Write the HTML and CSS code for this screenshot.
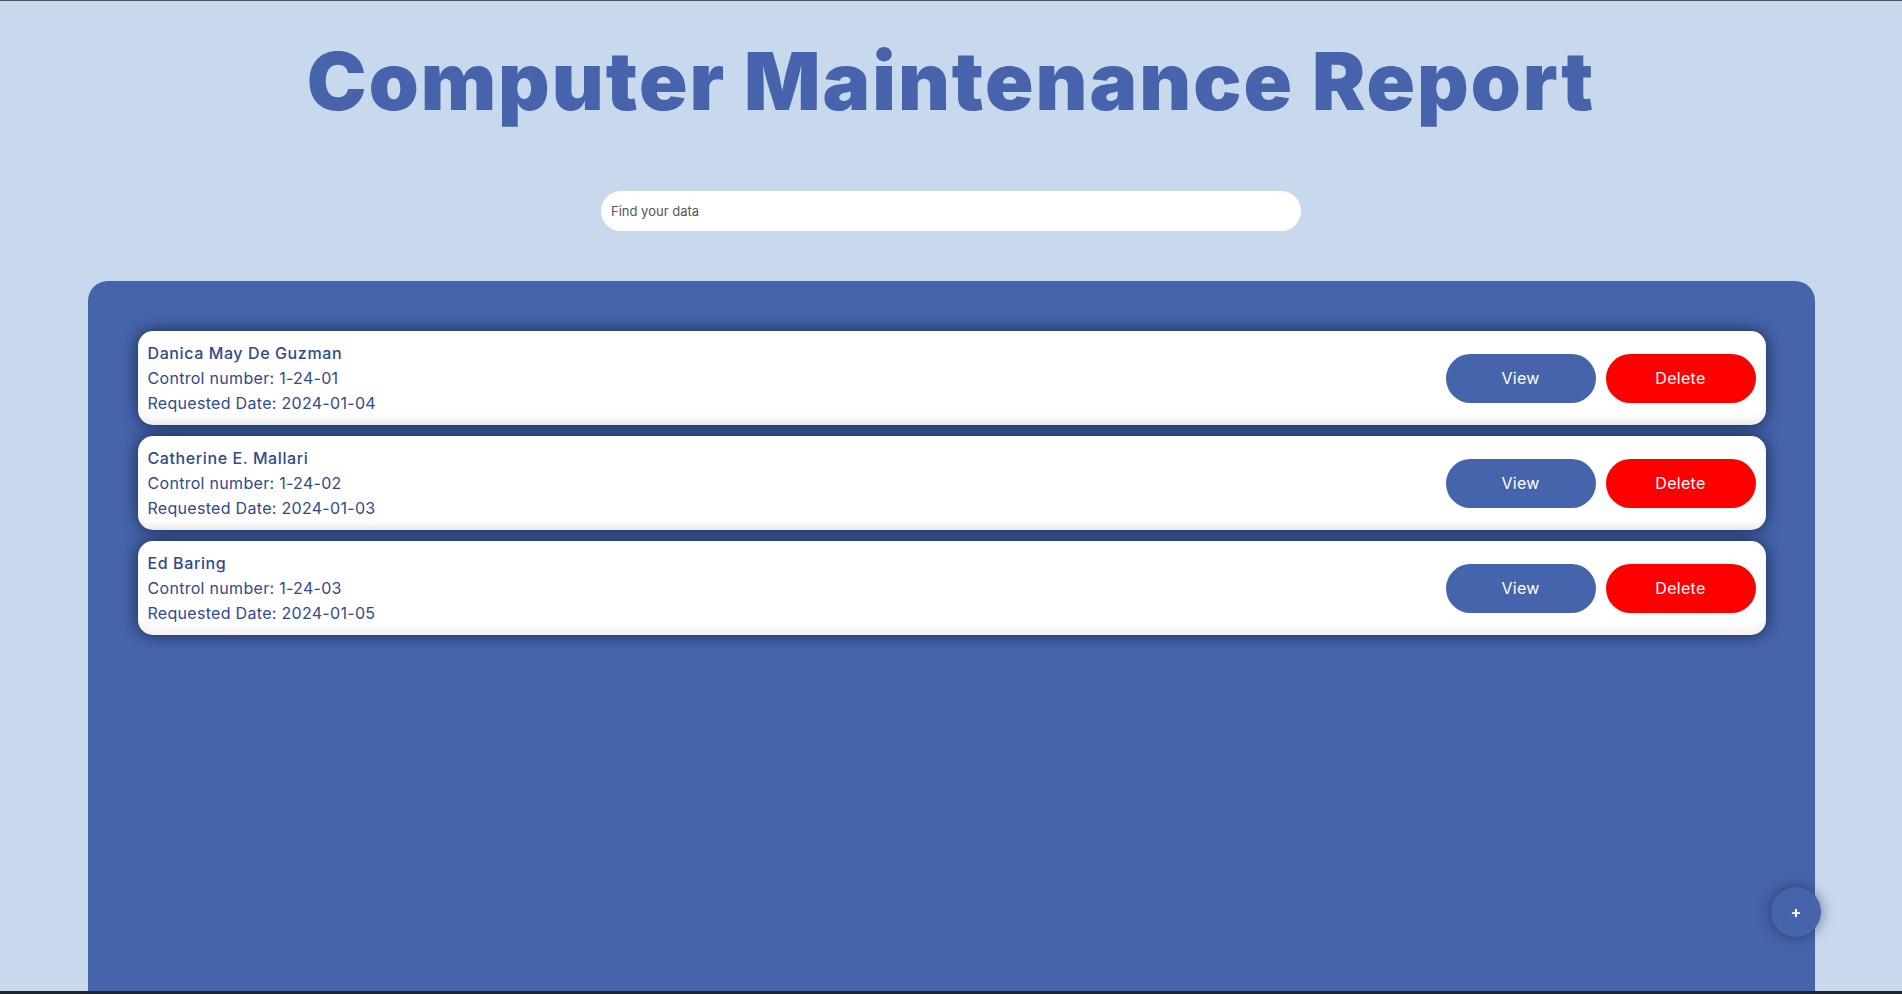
FILE: index.html
```html
<!DOCTYPE html>
<html lang="en">
<head>
<meta charset="utf-8">
<title>Computer Maintenance Report</title>
<link rel="stylesheet" href="styles.css">
</head>
<body>
<div class="page">
  <h1 class="title">Computer Maintenance Report</h1>
  <div class="search-row">
    <input class="search" type="text" placeholder="Find your data">
  </div>
  <main class="panel">
    <div class="card">
      <div class="info">
        <div class="name">Danica May De Guzman</div>
        <div class="line">Control number: 1-24-01</div>
        <div class="line">Requested Date: 2024-01-04</div>
      </div>
      <div class="actions">
        <button class="btn btn-view">View</button>
        <button class="btn btn-delete">Delete</button>
      </div>
    </div>
    <div class="card">
      <div class="info">
        <div class="name">Catherine E. Mallari</div>
        <div class="line">Control number: 1-24-02</div>
        <div class="line">Requested Date: 2024-01-03</div>
      </div>
      <div class="actions">
        <button class="btn btn-view">View</button>
        <button class="btn btn-delete">Delete</button>
      </div>
    </div>
    <div class="card">
      <div class="info">
        <div class="name">Ed Baring</div>
        <div class="line">Control number: 1-24-03</div>
        <div class="line">Requested Date: 2024-01-05</div>
      </div>
      <div class="actions">
        <button class="btn btn-view">View</button>
        <button class="btn btn-delete">Delete</button>
      </div>
    </div>
  </main>
</div>
<button class="fab">+</button>
<div class="edge-bottom"></div>
</body>
</html>
```

FILE: styles.css
```css
* { box-sizing: border-box; }
html, body {
  margin: 0;
  padding: 0;
  height: 100%;
  overflow: hidden;
}
body {
  background: #c8d9ee;
  font-family: "Inter", "Open Sans", sans-serif;
  border-top: 1px solid #4d5566;
}
.page {
  display: flex;
  flex-direction: column;
  align-items: center;
}
.title {
  margin: 32px 0 0;
  font-family: "Inter", sans-serif;
  font-weight: 900;
  font-size: 80px;
  line-height: 96px;
  letter-spacing: 2px;
  color: #4763ac;
  text-align: center;
}
.search-row {
  margin-top: 62px;
  width: 700px;
}
.search {
  display: block;
  width: 700px;
  height: 40px;
  border: none;
  outline: none;
  border-radius: 20px;
  background: #ffffff;
  padding: 0 10px;
  font-family: "Inter", sans-serif;
  font-size: 13px;
  color: #444;
}
.search::placeholder { color: #555; }
.panel {
  margin-top: 50px;
  width: 1727px;
  height: 760px;
  background: #4664ab;
  border-radius: 20px 20px 0 0;
  padding: 50px 49px 0 50px;
  display: flex;
  flex-direction: column;
  gap: 11px;
}
.card {
  height: 94px;
  background: #ffffff;
  border-radius: 15px;
  box-shadow: 0 0 16px rgba(10, 20, 50, 0.75), inset 0 -6px 8px rgba(0, 0, 0, 0.05);
  display: flex;
  align-items: center;
  justify-content: space-between;
  padding: 0 10px;
}
.info {
  display: flex;
  flex-direction: column;
  color: #2f4a8d;
  font-size: 16px;
  line-height: 25px;
  padding-top: 1px;
  letter-spacing: 0.3px;
}
.name { font-weight: 500; letter-spacing: 0.6px; }
.line { font-weight: 400; }
.actions {
  display: flex;
  gap: 10px;
}
.btn {
  width: 150px;
  height: 49px;
  border: none;
  border-radius: 25px;
  color: #ffffff;
  font-family: "Inter", sans-serif;
  font-size: 16px;
  font-weight: 400;
  letter-spacing: 0.3px;
  cursor: pointer;
}
.btn-view { background: #4664ab; }
.btn-delete { background: #ff0000; }
.fab {
  position: fixed;
  right: 81px;
  bottom: 57px;
  width: 50px;
  height: 50px;
  border-radius: 50%;
  border: none;
  background: #4664ab;
  color: #ffffff;
  font-family: "Inter", sans-serif;
  font-size: 16px;
  font-weight: 700;
  line-height: 50px;
  padding: 0;
  box-shadow: 0 0 14px rgba(20, 30, 60, 0.55);
}
.edge-bottom {
  position: fixed;
  left: 0;
  right: 0;
  bottom: 0;
  height: 3px;
  background: #22252e;
}
```
